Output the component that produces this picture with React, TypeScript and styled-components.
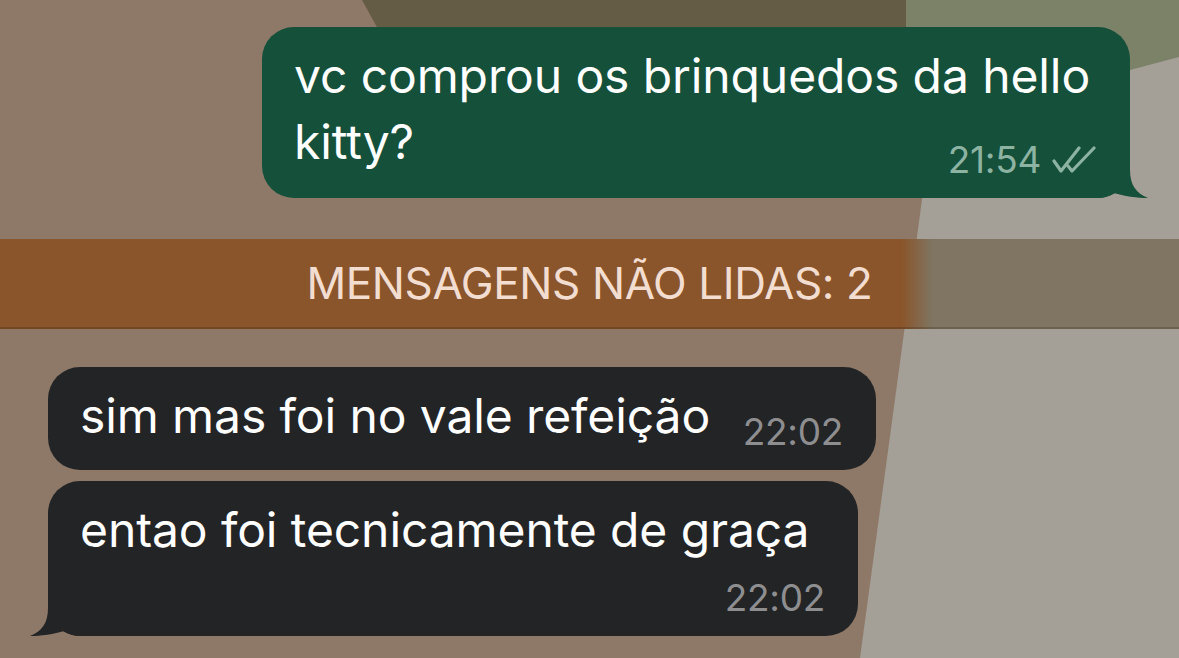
import React from 'react';
import styled, { createGlobalStyle } from 'styled-components';

const GlobalStyle = createGlobalStyle`
  html, body {
    margin: 0;
    padding: 0;
    background: #8e7968;
  }
  * {
    box-sizing: border-box;
  }
`;

type Tone = 'out' | 'in';

const Screen = styled.div`
  position: relative;
  width: 1179px;
  height: 658px;
  overflow: hidden;
  background: #8e7968;
  font-family: Inter, 'Noto Sans', sans-serif;
`;

const Wallpaper = styled.svg`
  position: absolute;
  inset: 0;
  width: 100%;
  height: 100%;
`;

const Thread = styled.div`
  position: relative;
  display: flex;
  flex-direction: column;
  padding-top: 27px;
`;

const Row = styled.div<{ $tone: Tone }>`
  display: flex;
  justify-content: ${(p) => (p.$tone === 'out' ? 'flex-end' : 'flex-start')};
  padding: ${(p) => (p.$tone === 'out' ? '0 49px 0 0' : '0 0 0 48px')};
  margin-bottom: ${(p) => (p.$tone === 'out' ? '41px' : '11px')};
`;

const Bubble = styled.div<{ $tone: Tone; $width: number }>`
  position: relative;
  width: ${(p) => p.$width}px;
  padding: 16px 33px 21px 32px;
  border-radius: 32px;
  background: ${(p) => (p.$tone === 'out' ? '#15503b' : '#232426')};
  color: #ffffff;
`;

const Text = styled.div`
  font-size: 48px;
  line-height: 66px;
  letter-spacing: -0.1px;
  white-space: nowrap;
`;

const Inline = styled.div`
  display: flex;
  align-items: flex-end;
  justify-content: space-between;
`;

const Meta = styled.div<{ $tone: Tone; $offset: number }>`
  display: flex;
  justify-content: flex-end;
  align-items: center;
  gap: 10px;
  margin-top: ${(p) => p.$offset}px;
  font-size: 37px;
  line-height: 34px;
  letter-spacing: -0.3px;
  color: ${(p) => (p.$tone === 'out' ? '#8db3a2' : '#8e8e90')};
`;

const Tail = styled.svg<{ $tone: Tone }>`
  position: absolute;
  bottom: 0;
  width: 50px;
  height: 40px;
  ${(p) => (p.$tone === 'out' ? 'right: -18px;' : 'left: -18px; transform: scaleX(-1);')}
`;

const UnreadBanner = styled.div`
  height: 90px;
  margin-bottom: 38px;
  display: flex;
  align-items: center;
  justify-content: center;
  background: linear-gradient(90deg, #8a552b 0, #8a552b 902px, #7f7562 932px, #7f7562 100%);
  border-bottom: 2px solid rgba(40, 24, 10, 0.22);
  color: #f2ddd0;
  font-size: 44px;
  letter-spacing: -0.4px;
`;

const Checks: React.FC = () => (
  <svg width="46" height="28" viewBox="0 0 46 28">
    <g fill="none" stroke="#8db3a2" strokeWidth="3.2" strokeLinecap="round" strokeLinejoin="round">
      <path d="M3 15 L10 25 L28 2" />
      <path d="M17 20 L21 25 L43 2" />
    </g>
  </svg>
);

const BubbleTail: React.FC<{ tone: Tone }> = ({ tone }) => (
  <Tail $tone={tone} viewBox="0 0 50 40">
    <path
      d="M0 0 H32 V12 C32 27 38 35 50 40 C40 40 25 38 16 35 C12 38 6 40 0 40 Z"
      fill={tone === 'out' ? '#15503b' : '#232426'}
    />
  </Tail>
);

export default function App() {
  return (
    <>
      <GlobalStyle />
      <Screen>
        <Wallpaper viewBox="0 0 1179 658" preserveAspectRatio="none">
          <rect width="1179" height="658" fill="#8e7968" />
          <polygon points="949,0 1179,0 1179,658 860,658" fill="#a49f97" />
          <polygon points="362,0 906,0 906,60 395,60" fill="#655c45" />
          <polygon points="906,0 1179,0 1179,57 1130,70 906,130" fill="#7b8268" />
        </Wallpaper>
        <Thread>
          <Row $tone="out">
            <Bubble $tone="out" $width={868}>
              <Text>
                vc comprou os brinquedos da hello
                <br />
                kitty?
              </Text>
              <Meta $tone="out" $offset={-32}>
                <span>21:54</span>
                <Checks />
              </Meta>
              <BubbleTail tone="out" />
            </Bubble>
          </Row>

          <UnreadBanner>MENSAGENS NÃO LIDAS: 2</UnreadBanner>

          <Row $tone="in">
            <Bubble $tone="in" $width={828}>
              <Inline>
                <Text>sim mas foi no vale refeição</Text>
                <Meta $tone="in" $offset={0}>
                  <span>22:02</span>
                </Meta>
              </Inline>
            </Bubble>
          </Row>
          <Row $tone="in">
            <Bubble $tone="in" $width={810}>
              <Text>entao foi tecnicamente de graça</Text>
              <Meta $tone="in" $offset={18}>
                <span>22:02</span>
              </Meta>
              <BubbleTail tone="in" />
            </Bubble>
          </Row>
        </Thread>
      </Screen>
    </>
  );
}
